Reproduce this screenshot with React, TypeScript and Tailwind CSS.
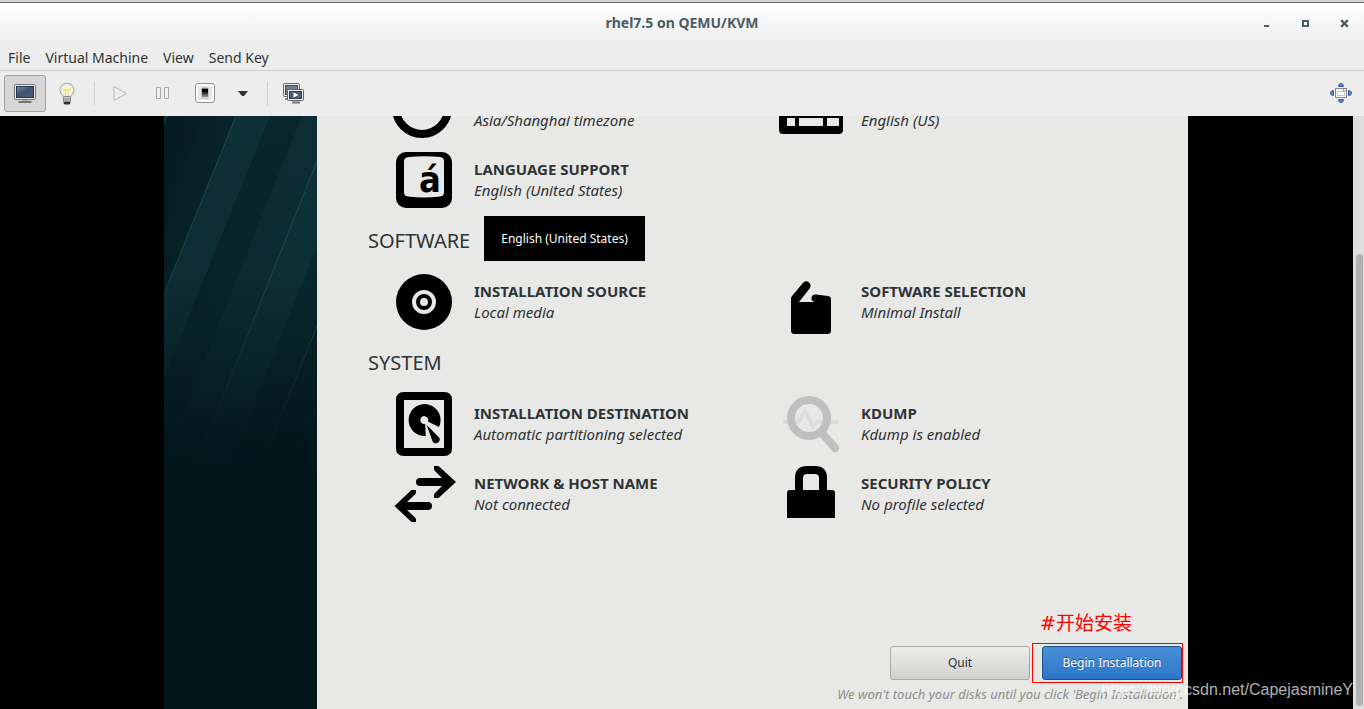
import type { ReactNode } from "react";

const menus = ["File", "Virtual Machine", "View", "Send Key"];

function Icon64({ children }: { children: ReactNode }) {
  return (
    <svg viewBox="0 0 64 64" className="size-16 shrink-0" aria-hidden="true">
      {children}
    </svg>
  );
}

const ClockIcon = () => (
  <Icon64>
    <circle cx="30" cy="30" r="26" fill="none" stroke="#000" strokeWidth="8" />
  </Icon64>
);

const KeyboardIcon = () => (
  <Icon64>
    <path
      fillRule="evenodd"
      d="M4 12H60Q64 12 64 16V52Q64 56 60 56H4Q0 56 0 52V16Q0 12 4 12ZM8 40V48H16V40ZM20 40V48H44V40ZM48 40V48H60V40Z"
    />
  </Icon64>
);

const LanguageIcon = () => (
  <Icon64>
    <rect x="4" y="4" width="56" height="56" rx="10" />
    <path
      d="M17 9Q32 7.500 48 9Q52 9.500 52 13V44Q52 48 48 48.500Q32 50.500 16 48.500Q12 48 12 44V13Q12 9.500 17 9Z"
      fill="#e8e8e6"
    />
    <text x="27" y="44" fontSize="36" fontWeight="bold" fontFamily="'DejaVu Sans Condensed', 'DejaVu Sans', sans-serif">
      á
    </text>
  </Icon64>
);

const DiscIcon = () => (
  <Icon64>
    <circle cx="32" cy="32" r="28" />
    <circle cx="32" cy="32" r="10" fill="none" stroke="#e8e8e6" strokeWidth="4" />
    <circle cx="32" cy="32" r="4" fill="#e8e8e6" />
  </Icon64>
);

const PackageIcon = () => (
  <Icon64>
    <path d="M12 28.500Q12 27 13 26L23.500 13.500A4.200 4.200 0 0 1 31 18L20 32H36Q31.500 30.500 32.500 27.500Q33.500 24 37 24.500L49 26Q52 26.500 52 29V60.500Q52 64 48.500 64H15.500Q12 64 12 60.500Z" />
  </Icon64>
);

const DriveIcon = () => (
  <Icon64>
    <path
      fillRule="evenodd"
      d="M12 0H52Q60 0 60 8V56Q60 64 52 64H12Q4 64 4 56V8Q4 0 12 0ZM12 8V56H52V8Z"
    />
    <path d="M47 35A16 16 0 1 0 33.700 44L33.200 32A4 4 0 1 1 36 29.500Z" />
    <path d="M34.700 33L47.500 46A4 4 0 0 1 40.800 50Z" />
  </Icon64>
);

const NetworkIcon = () => (
  <Icon64>
    <path d="M28 16H50L43 9Q42 8 42 6.500V4H46.500L64 20L46.500 36H42V33.500Q42 32 43 31L50 24H28A4 4 0 0 1 28 16Z" />
    <path d="M36 40H15L23 32.500Q24 31.500 24 30.500V28H19.500L2.500 44L19.500 60H24V57.500Q24 56.500 23 55.500L15 48H36A4 4 0 0 0 36 40Z" />
  </Icon64>
);

const KdumpIcon = () => (
  <Icon64>
    <path d="M4 30H19.500L26 19L34 34L38 30H60" fill="none" stroke="#dcdcdc" strokeWidth="4" />
    <circle cx="30" cy="26" r="18" fill="none" stroke="#bfbfbf" strokeWidth="8" />
    <path d="M42 40L56 56" stroke="#bfbfbf" strokeWidth="8" strokeLinecap="round" />
  </Icon64>
);

const LockIcon = () => (
  <Icon64>
    <path d="M20 30V16Q20 8 28 8H36Q44 8 44 16V30" fill="none" stroke="#000" strokeWidth="8" />
    <path d="M11 28H53Q56 28 56 31V56H8V31Q8 28 11 28Z" />
  </Icon64>
);

type SpokeProps = { icon: ReactNode; title?: string; status: string };

function Spoke({ icon, title, status }: SpokeProps) {
  return (
    <button className="flex h-16 items-center gap-[18px] text-left whitespace-nowrap">
      {icon}
      <span className="text-[15px] leading-[21px] text-[#2e3436]">
        <span className="block h-[21px] font-bold">{title}</span>
        <span className="block italic">{status}</span>
      </span>
    </button>
  );
}

function SpokeGrid({ children }: { children: ReactNode }) {
  return <div className="grid max-w-[798px] grid-cols-2 gap-y-1.5 pl-6">{children}</div>;
}

function Heading({ children }: { children: ReactNode }) {
  return <h2 className="h-[58px] text-xl leading-[58px] text-[#2e3436]">{children}</h2>;
}

const MonitorGlyph = () => (
  <svg viewBox="0 0 24 24" className="size-6" aria-hidden="true">
    <defs>
      <linearGradient id="screen" x1="0" y1="0" x2="1" y2="1">
        <stop offset="0" stopColor="#7286a0" />
        <stop offset="0.5" stopColor="#41516b" />
        <stop offset="1" stopColor="#52627c" />
      </linearGradient>
    </defs>
    <rect x="1.500" y="2.500" width="21" height="15" rx="1" fill="#eceae6" stroke="#77776f" />
    <rect x="3.500" y="4.500" width="17" height="11" fill="url(#screen)" stroke="#27344a" />
    <path d="M9 18H15V20H9Z" fill="#aaa" />
    <path d="M5.500 20H18.500" stroke="#77776f" strokeWidth="2" />
  </svg>
);

const BulbGlyph = () => (
  <svg viewBox="0 0 24 24" className="size-6" aria-hidden="true">
    <defs>
      <radialGradient id="glow">
        <stop offset="0" stopColor="#fffbb0" />
        <stop offset="0.600" stopColor="#f4f3e4" />
        <stop offset="1" stopColor="#dededa" />
      </radialGradient>
    </defs>
    <path
      d="M12 1A7 7 0 0 0 6 11.800Q8.500 14 8.500 15.500H15.500Q15.500 14 18 11.800A7 7 0 0 0 12 1Z"
      fill="url(#glow)"
      stroke="#a9a9a2"
    />
    <path d="M8.500 7Q12 9.500 15.500 7L13.500 9.500H10.500Z" fill="#fff04a" stroke="#f3e36a" />
    <path d="M10.500 10V14M13.500 10V14" stroke="#d8d6b8" />
    <rect x="8.500" y="14.500" width="7" height="6" rx="1" fill="#c9c9c5" stroke="#85857f" />
    <path d="M9 17H15M9 19H15" stroke="#8f8f8a" />
    <ellipse cx="12" cy="21" rx="3.500" ry="1.500" fill="#35352f" />
  </svg>
);

const PlayGlyph = () => (
  <svg viewBox="0 0 24 24" className="size-6" aria-hidden="true">
    <path d="M6 4.500V18.500L18.500 11.500Z" fill="#eeeeec" stroke="#b7b7b4" strokeLinejoin="round" />
  </svg>
);

const PauseGlyph = () => (
  <svg viewBox="0 0 24 24" className="size-6" aria-hidden="true">
    <path d="M6.500 5.500H10.500V16.500H6.500ZM14.500 5.500H18.500V16.500H14.500Z" fill="#f1f1ef" stroke="#a9a9a6" />
  </svg>
);

const PowerGlyph = () => (
  <svg viewBox="0 0 24 24" className="size-6" aria-hidden="true">
    <defs>
      <linearGradient id="rocker" x1="0" y1="0" x2="0" y2="1">
        <stop offset="0.300" stopColor="#000" />
        <stop offset="1" stopColor="#aaa" />
      </linearGradient>
    </defs>
    <rect x="3.500" y="1.500" width="19" height="19" rx="2.500" fill="#fbfbfa" stroke="#93938f" />
    <rect x="6" y="4" width="14" height="14" rx="1" fill="#e6e6e4" />
    <rect x="9.500" y="5.500" width="7" height="11" rx="1" fill="#fff" stroke="#c4c4c0" />
    <rect x="10" y="6.500" width="6" height="9" fill="url(#rocker)" />
  </svg>
);

const ScreensGlyph = () => (
  <svg viewBox="0 0 24 24" className="size-6" aria-hidden="true">
    <rect x="2.500" y="1.500" width="16" height="13" rx="1" fill="#eee" stroke="#66665f" />
    <rect x="4.500" y="3.500" width="12" height="9" fill="#6d7f8c" stroke="#3c4a55" />
    <path d="M4 17H8" stroke="#88887f" strokeWidth="2" />
    <rect x="6.500" y="7.500" width="16" height="11" rx="1" fill="#eee" stroke="#66665f" />
    <rect x="8.500" y="9.500" width="12" height="7" fill="#4d5f7d" stroke="#2f3d55" />
    <path d="M12.500 10.500V15.500L17.500 13Z" fill="#fff" />
    <path d="M11 20.500H19" stroke="#77776f" strokeWidth="2" />
  </svg>
);

const FullscreenGlyph = () => (
  <svg viewBox="0 0 24 24" className="size-6" aria-hidden="true">
    <g fill="#5f8bc4" stroke="#34609c">
      <path d="M9.500 4.500Q9.500 1.500 12 1.500T14.500 4.500Z" />
      <path d="M9.500 17.500Q9.500 20.500 12 20.500T14.500 17.500Z" />
      <path d="M4.500 8.500Q1.500 8.500 1.500 11T4.500 13.500Z" />
      <path d="M19.500 8.500Q22.500 8.500 22.500 11T19.500 13.500Z" />
    </g>
    <rect x="6.500" y="6.500" width="11" height="9" fill="#f4f4f2" stroke="#888884" />
    <path d="M8.500 9.500H15.500V13.500H8.500Z" fill="#fff" stroke="#c8c8c4" />
    <path d="M14.500 7V9H17" fill="none" stroke="#b0b0ac" />
  </svg>
);

function ToolButton({ label, children }: { label: string; children: ReactNode }) {
  return (
    <button aria-label={label} className="flex h-[37px] w-[42px] items-center justify-center">
      {children}
    </button>
  );
}

function Backdrop() {
  return (
    <svg viewBox="0 0 153 593" preserveAspectRatio="none" className="size-full" aria-hidden="true">
      <defs>
        <linearGradient id="fade" x1="0" y1="0" x2="0" y2="1">
          <stop offset="0" stopColor="#021519" stopOpacity="0.050" />
          <stop offset="0.270" stopColor="#021519" stopOpacity="0.150" />
          <stop offset="0.400" stopColor="#021519" stopOpacity="0.450" />
          <stop offset="0.530" stopColor="#021519" stopOpacity="0.850" />
          <stop offset="0.650" stopColor="#021519" />
        </linearGradient>
        <linearGradient id="corner" x1="0" y1="0" x2="0.600" y2="0.200">
          <stop offset="0" stopColor="#02171b" stopOpacity="0.800" />
          <stop offset="1" stopColor="#02171b" stopOpacity="0" />
        </linearGradient>
      </defs>
      <rect width="153" height="593" fill="#09282c" />
      <path d="M38 0H72L0 178V92Z" fill="#0b2a2f" />
      <rect width="153" height="200" fill="url(#corner)" />
      <path d="M72 0H106L0 262V178Z" fill="#0e3138" />
      <path d="M138 0H153V45L0 424V345Z" fill="#0d2f36" />
      <path d="M153 45V132L0 510V424Z" fill="#0e3439" />
      <path d="M153 132V210L0 589V510Z" fill="#0a2b2f" />
      <path d="M0 0H4L0 10Z" fill="#0f3a42" />
      <g stroke="#1f5157">
        <path d="M72 0L0 178" />
        <path d="M153 45L20 378" />
        <path d="M153 210L96 351" />
        <path d="M153 292L138 330" />
      </g>
      <rect width="153" height="593" fill="url(#fade)" />
    </svg>
  );
}

export default function App() {
  return (
    <div className="flex h-screen flex-col overflow-hidden bg-[#ededed] font-['Noto_Sans','Noto_Sans_CJK_SC',sans-serif]">
      <header className="border-t-2 border-[#d4d4d4]">
        <div className="grid h-[41px] grid-cols-[1fr_auto_1fr] items-center border-t border-[#6a6a6a] bg-linear-to-b from-white to-[#ededed]">
          <span />
          <h1 className="text-sm font-bold text-[#4b5c64]">rhel7.5 on QEMU/KVM</h1>
          <div className="flex justify-end">
            <button aria-label="Minimize" className="flex h-5 w-[39px] items-center justify-center">
              <svg viewBox="0 0 9 9" className="size-[9px]" aria-hidden="true">
                <path d="M2 6H7V8H2Z" fill="#4b5c64" />
              </svg>
            </button>
            <button aria-label="Maximize" className="flex h-5 w-[39px] items-center justify-center">
              <svg viewBox="0 0 9 9" className="size-[9px]" aria-hidden="true">
                <path d="M2 2H7V7H2Z" fill="none" stroke="#4b5c64" strokeWidth="2" />
              </svg>
            </button>
            <button aria-label="Close" className="flex h-5 w-[39px] items-center justify-center">
              <svg viewBox="0 0 9 9" className="size-[9px]" aria-hidden="true">
                <path d="M2 2L7 7M7 2L2 7" stroke="#4b5c64" strokeWidth="2.400" strokeLinecap="square" />
              </svg>
            </button>
          </div>
        </div>
        <nav className="flex h-7 items-center gap-[15px] border-b border-[#d0d0d0] px-2 pt-0.5 text-sm text-[#2e3436]">
          {menus.map((menu) => (
            <button key={menu}>{menu}</button>
          ))}
        </nav>
      </header>

      <div className="flex h-[45px] shrink-0 items-center pl-1">
        <button
          aria-label="Graphical console"
          className="flex h-[37px] w-[42px] items-center justify-center rounded-[3px] border border-[#a0a0a0] bg-[#d6d6d6]"
        >
          <MonitorGlyph />
        </button>
        <ToolButton label="Details">
          <BulbGlyph />
        </ToolButton>
        <span className="mr-1 ml-1.5 h-6 w-px bg-[#d0d0d0]" />
        <ToolButton label="Run">
          <PlayGlyph />
        </ToolButton>
        <ToolButton label="Pause">
          <PauseGlyph />
        </ToolButton>
        <ToolButton label="Shut down">
          <PowerGlyph />
        </ToolButton>
        <button aria-label="Shutdown options" className="flex h-[37px] w-9 items-center justify-center">
          <svg viewBox="0 0 10 6" className="h-1.5 w-2.5" aria-hidden="true">
            <path d="M0 0H10L6 5H4Z" fill="#2e3436" />
          </svg>
        </button>
        <span className="mr-1 ml-1.5 h-6 w-px bg-[#d0d0d0]" />
        <ToolButton label="Snapshots">
          <ScreensGlyph />
        </ToolButton>
        <div className="ml-auto pr-0.5">
          <ToolButton label="Resize to VM">
            <FullscreenGlyph />
          </ToolButton>
        </div>
      </div>

      <main className="relative flex min-h-0 flex-1">
        <div className="flex min-w-0 flex-1 justify-center bg-black pr-px">
          <div className="flex w-full max-w-[1024px]">
            <aside className="w-[153px] shrink-0 overflow-hidden bg-[#021519]">
              <Backdrop />
            </aside>

            <section className="flex min-w-0 flex-1 flex-col overflow-hidden bg-[#e8e8e6]">
              <div className="-mt-[38px] pl-[51px]">
                <SpokeGrid>
                  <Spoke icon={<ClockIcon />} status="Asia/Shanghai timezone" />
                  <Spoke icon={<KeyboardIcon />} status="English (US)" />
                  <div className="relative">
                    <Spoke icon={<LanguageIcon />} title="LANGUAGE SUPPORT" status="English (United States)" />
                    <div
                      role="tooltip"
                      className="absolute top-[68px] left-[92px] flex h-[45px] w-[161px] items-center justify-center bg-black text-xs whitespace-nowrap text-white"
                    >
                      English (United States)
                    </div>
                  </div>
                </SpokeGrid>
                <Heading>SOFTWARE</Heading>
                <SpokeGrid>
                  <Spoke icon={<DiscIcon />} title="INSTALLATION SOURCE" status="Local media" />
                  <Spoke icon={<PackageIcon />} title="SOFTWARE SELECTION" status="Minimal Install" />
                </SpokeGrid>
                <Heading>SYSTEM</Heading>
                <SpokeGrid>
                  <Spoke icon={<DriveIcon />} title="INSTALLATION DESTINATION" status="Automatic partitioning selected" />
                  <Spoke icon={<KdumpIcon />} title="KDUMP" status="Kdump is enabled" />
                  <Spoke icon={<NetworkIcon />} title="NETWORK & HOST NAME" status="Not connected" />
                  <Spoke icon={<LockIcon />} title="SECURITY POLICY" status="No profile selected" />
                </SpokeGrid>
              </div>

              <footer className="mt-auto flex flex-col items-end pr-[5px] pb-1.5">
                <div className="flex items-end gap-0.5">
                  <button className="mb-[3px] h-[34px] w-[140px] rounded-[3px] border border-[#a8a8a6] bg-linear-to-b from-[#eeeeec] to-[#d0d0ce] text-xs text-[#2e3436]">
                    Quit
                  </button>
                  <div>
                    <p className="pb-1.5 pl-2 font-['DejaVu_Sans','Noto_Sans_CJK_SC',sans-serif] text-[19px] leading-7 text-[#f00]">
                      #开始安装
                    </p>
                    <div className="border border-[#f00] py-0.5 pl-[9px]">
                      <button className="block h-[34px] w-[140px] rounded-[3px] border border-[#1c5187] bg-linear-to-b from-[#4a90d9] to-[#2a76c6] text-xs text-white [text-shadow:0_-1px_#1c5187]">
                        Begin Installation
                      </button>
                    </div>
                  </div>
                </div>
                <p className="pt-0.5 text-[13px] leading-[18px] text-[#8c8e8d] italic">
                  We won't touch your disks until you click 'Begin Installation'.
                </p>
              </footer>
            </section>
          </div>
        </div>
        <div className="flex w-[11px] shrink-0 flex-col justify-end bg-[#dedede] py-[3px] pr-px pl-[3px]">
          <div className="h-[77%] rounded-full bg-[#b0b1b1]" />
        </div>
        <p className="absolute right-[11px] bottom-2 font-['Liberation_Sans',sans-serif] text-base leading-[22px] text-white/70">
          https://blog.csdn.net/CapejasmineY
        </p>
      </main>
    </div>
  );
}
